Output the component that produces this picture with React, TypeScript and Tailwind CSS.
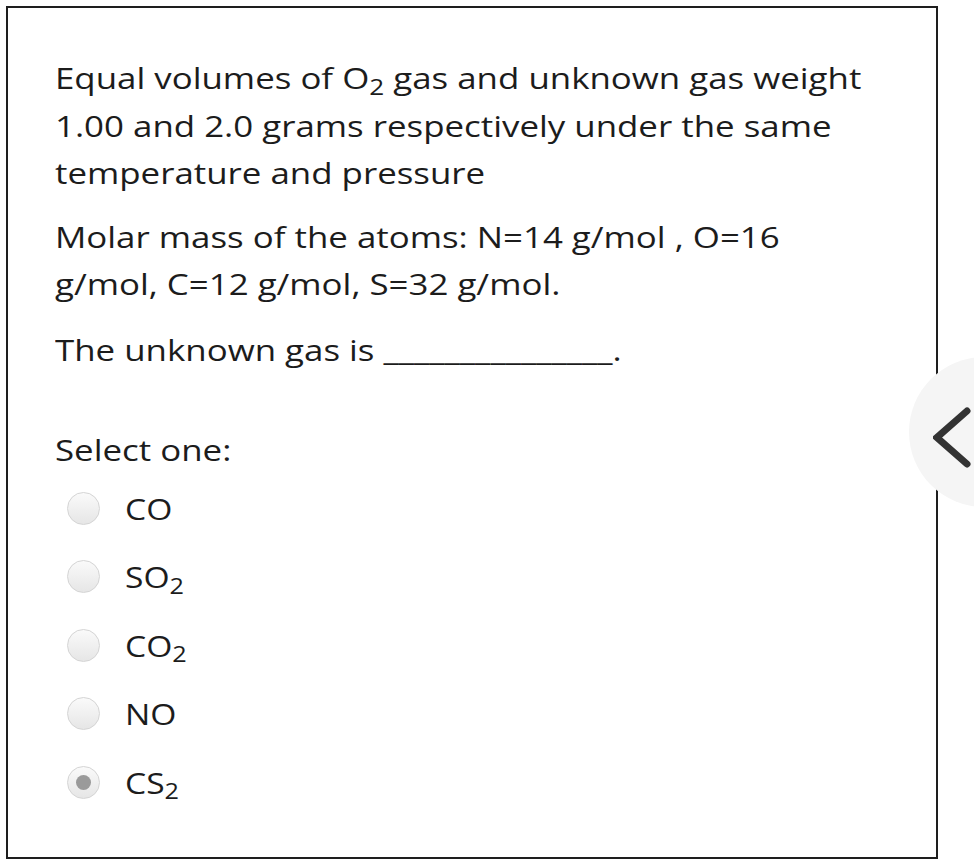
import React from "react";

const options: { label: React.ReactNode; checked?: boolean }[] = [
  { label: <>CO</> },
  { label: <>SO<sub>2</sub></> },
  { label: <>CO<sub>2</sub></> },
  { label: <>NO</> },
  { label: <>CS<sub>2</sub></>, checked: true },
];

function Radio({ checked }: { checked?: boolean }) {
  return (
    <span className="flex h-[33px] w-[33px] shrink-0 items-center justify-center rounded-full border border-[#d4d4d4] bg-gradient-to-b from-[#fafafa] to-[#e6e6e6]">
      {checked && <span className="h-[15px] w-[15px] rounded-full bg-[#9a9a9a]" />}
    </span>
  );
}

export default function App() {
  return (
    <div
      className="relative h-[864px] w-[974px] overflow-hidden bg-white text-[#1c1c1c]"
      style={{ fontFamily: '"Open Sans", "Noto Sans", sans-serif' }}
    >
      <div className="p-[6px]">
        <div className="h-[853px] w-[932px] border-2 border-[#1e1e1e] pl-[47px] pt-[46px]">
          <div className="text-[30px] leading-[47.5px]">
            <p className="origin-left scale-x-[1.162] whitespace-nowrap">
              Equal volumes of O<sub>2</sub> gas and unknown gas weight
              <br />
              1.00 and 2.0 grams respectively under the same
              <br />
              temperature and pressure
            </p>
            <p className="mt-[16px] origin-left scale-x-[1.162] whitespace-nowrap">
              Molar mass of the atoms: N=14 g/mol , O=16
              <br />
              g/mol, C=12 g/mol, S=32 g/mol.
            </p>
            <p className="mt-[18px] origin-left scale-x-[1.162] whitespace-nowrap">
              The unknown gas is _______________.
            </p>
            <p className="mt-[53px] origin-left scale-x-[1.162] whitespace-nowrap">Select one:</p>
            <div className="mt-[11px] flex flex-col gap-[21px] pl-[12px]">
              {options.map((o, i) => (
                <div key={i} className="flex items-center gap-[25px]">
                  <Radio checked={o.checked} />
                  <span className="inline-block origin-left scale-x-[1.12]">{o.label}</span>
                </div>
              ))}
            </div>
          </div>
        </div>
      </div>
      <div className="absolute left-[909px] top-[357px] h-[150px] w-[150px] rounded-full bg-[#f5f5f5]">
        <svg width="40" height="70" viewBox="0 0 40 70" className="absolute left-[24px] top-[45px]">
          <path d="M34 9 L4 35.5 L34 62" fill="none" stroke="#333" strokeWidth="7" strokeLinecap="round" strokeLinejoin="miter" />
        </svg>
      </div>
    </div>
  );
}
